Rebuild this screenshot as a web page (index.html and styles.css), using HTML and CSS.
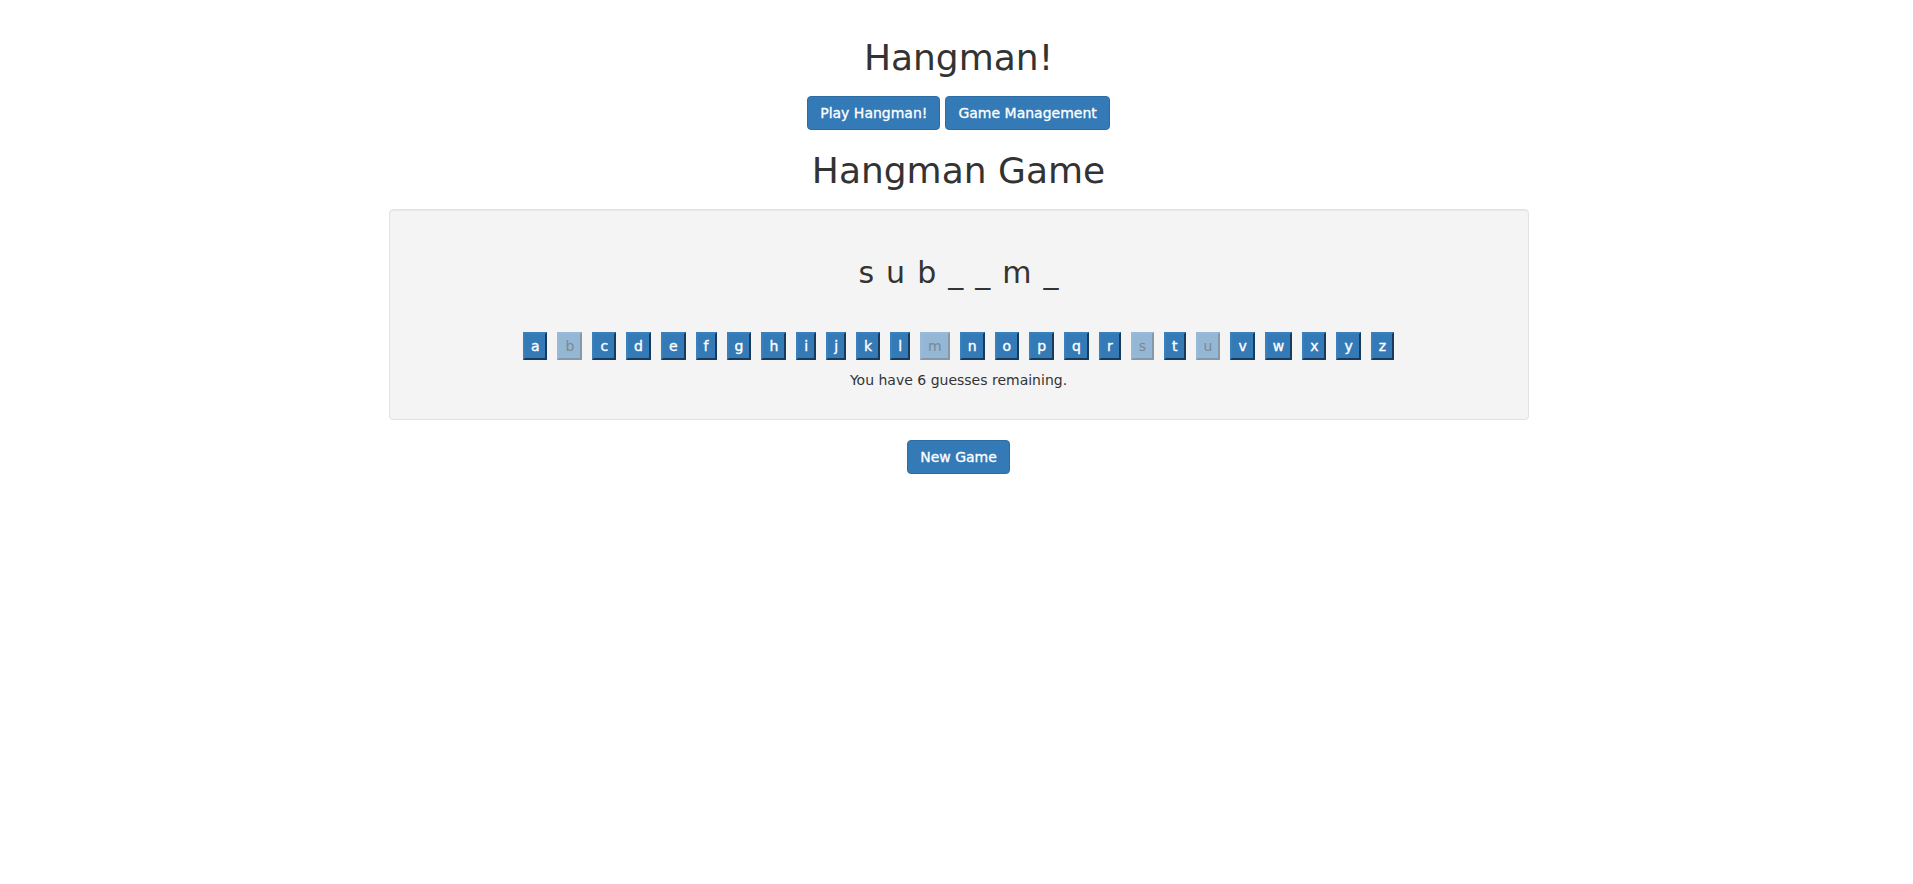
FILE: index.html
```html
<!DOCTYPE html>
<html lang="en">
<head>
<meta charset="utf-8">
<title>Hangman!</title>
<link rel="stylesheet" href="styles.css">
</head>
<body>
<div class="container">
  <h1 class="title">Hangman!</h1>
  <div class="nav">
    <button class="btn btn-primary" type="button">Play Hangman!</button>
    <button class="btn btn-primary" type="button">Game Management</button>
  </div>
  <h1 class="title game-title">Hangman Game</h1>
  <div class="well">
    <h2 class="word">s u b _ _ m _</h2>
    <div class="letters">
      <button class="letter" type="button">a</button>
      <button class="letter" type="button" disabled>b</button>
      <button class="letter" type="button">c</button>
      <button class="letter" type="button">d</button>
      <button class="letter" type="button">e</button>
      <button class="letter" type="button">f</button>
      <button class="letter" type="button">g</button>
      <button class="letter" type="button">h</button>
      <button class="letter" type="button">i</button>
      <button class="letter" type="button">j</button>
      <button class="letter" type="button">k</button>
      <button class="letter" type="button">l</button>
      <button class="letter" type="button" disabled>m</button>
      <button class="letter" type="button">n</button>
      <button class="letter" type="button">o</button>
      <button class="letter" type="button">p</button>
      <button class="letter" type="button">q</button>
      <button class="letter" type="button">r</button>
      <button class="letter" type="button" disabled>s</button>
      <button class="letter" type="button">t</button>
      <button class="letter" type="button" disabled>u</button>
      <button class="letter" type="button">v</button>
      <button class="letter" type="button">w</button>
      <button class="letter" type="button">x</button>
      <button class="letter" type="button">y</button>
      <button class="letter" type="button">z</button>
    </div>
    <p class="remaining">You have 6 guesses remaining.</p>
  </div>
  <div class="actions">
    <button class="btn btn-primary" type="button">New Game</button>
  </div>
</div>
</body>
</html>
```
FILE: styles.css
```css
html, body {
  margin: 0;
  background: #fff;
}

body {
  padding: 0 0 0 4px;
  font-family: "DejaVu Sans", Verdana, sans-serif;
  font-size: 14px;
  line-height: 20px;
  color: #333;
}

.container {
  width: 1140px;
  margin: 0 auto;
  padding-top: 38px;
  text-align: center;
}

.title {
  margin: 0;
  font-size: 36px;
  line-height: 40px;
  font-weight: normal;
  color: #333;
}

.nav {
  display: flex;
  justify-content: center;
  gap: 5px;
  margin-top: 18px;
}

.btn {
  font-family: inherit;
  font-size: 14px;
  line-height: 20px;
  padding: 6px 12px;
  border: 1px solid #2e6da4;
  border-radius: 4px;
  background: #337ab7;
  color: #fff;
  -webkit-text-stroke: 0.3px #fff;
  cursor: pointer;
}

.game-title {
  margin-top: 21px;
}

.well {
  margin-top: 18px;
  padding: 19px;
  background: #f4f4f4;
  border: 1px solid #e3e3e3;
  border-radius: 4px;
  box-shadow: inset 0 1px 1px rgba(0, 0, 0, 0.05);
}

.word {
  margin: 27px 0 0;
  font-size: 30px;
  line-height: 33px;
  font-weight: normal;
  word-spacing: 2.5px;
  color: #333;
}

.letters {
  display: flex;
  justify-content: center;
  gap: 10px;
  margin-top: 43px;
}

.letter {
  height: 28px;
  padding: 0 6px;
  font-family: inherit;
  font-size: 14px;
  line-height: 20px;
  background: #337ab7;
  color: #fff;
  -webkit-text-stroke: 0.35px #fff;
  border: 2px solid;
  border-color: #3a80bd #183b5c #183b5c #3a80bd;
  border-radius: 0;
  cursor: pointer;
}

.letter:disabled {
  background: #94b7d6;
  color: #7b8894;
  -webkit-text-stroke: 0;
  border-color: #98bad8 #8896a6 #8896a6 #98bad8;
  cursor: default;
}

.remaining {
  margin: 10px 0 10px;
  line-height: 20px;
}

.actions {
  margin-top: 20px;
}
```
